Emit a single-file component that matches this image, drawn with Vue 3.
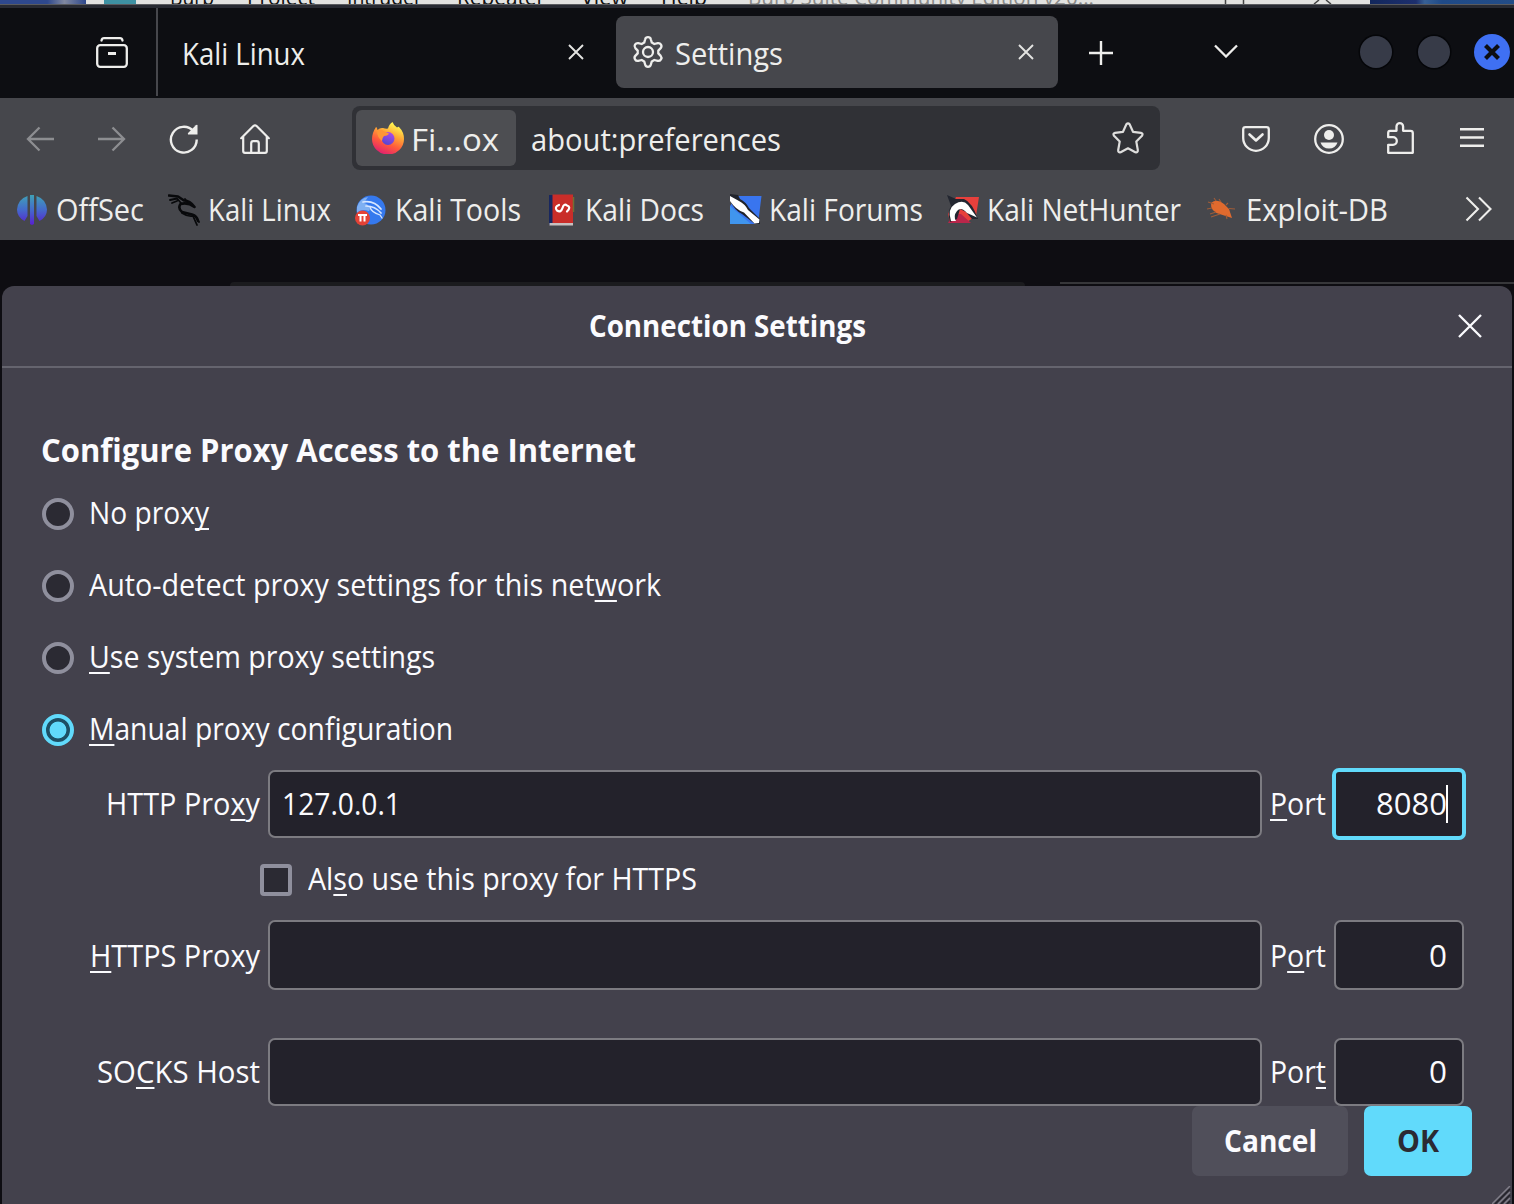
<script setup>
// Squeezes or stretches a label horizontally to a given advance width.
const vFit = {
  mounted(el, { value }) {
    const natural = el.getBoundingClientRect().width
    el.style.transform = `scaleX(${value / natural})`
    el.style.marginRight = `${value - natural}px`
  },
}

const menus = [
  { label: 'Burp', x: 0, w: 44 },
  { label: 'Project', x: 33, w: 68 },
  { label: 'Intruder', x: 32, w: 75 },
  { label: 'Repeater', x: 35, w: 88 },
  { label: 'View', x: 36, w: 47 },
  { label: 'Help', x: 33, w: 46 },
]

const radios = [
  { before: 'No prox', key: 'y', after: '', w: 120 },
  { before: 'Auto-detect proxy settings for this net', key: 'w', after: 'ork', w: 572 },
  { before: '', key: 'U', after: 'se system proxy settings', w: 346 },
  { before: '', key: 'M', after: 'anual proxy configuration', w: 364, on: true },
]
</script>

<template>
  <div class="screen">
    <div class="behind">
      <div class="wall left"></div>
      <div class="appicon"></div>
      <div class="menus">
        <span v-for="m in menus" :key="m.label" class="slot" :style="{ marginLeft: m.x + 'px' }"><span v-fit="m.w" class="t">{{ m.label }}</span></span>
        <span class="slot title"><span v-fit="346" class="t">Burp Suite Community Edition v20...</span></span>
      </div>
      <svg class="ctl" width="120" height="4" viewBox="0 0 120 4"><path d="M8.500 0V4M26.500 0V4M97 4l5-4M114 4l-5-4" fill="none" stroke="#444" stroke-width="1.500" /></svg>
      <div class="wall right"></div>
    </div>
    <div class="edge"></div>

    <div class="tabs">
      <div class="recent">
        <svg width="32" height="32" viewBox="0 0 32 32" fill="none" stroke="#eeeeec" stroke-width="2.300" stroke-linecap="round"><path d="M5.500 4.500Q6 2.200 8 2.200H24Q26 2.200 26.500 4.500" /><rect x="1.200" y="9.200" width="29.600" height="21.600" rx="3" /><path d="M12 17.500H20" stroke-width="3" stroke-linecap="butt" /></svg>
      </div>
      <div class="tab">
        <span class="grow"><span v-fit="123" class="t">Kali Linux</span></span>
        <svg width="16" height="16" viewBox="0 0 16 16"><path d="M1 1L15 15M15 1L1 15" stroke="#e4e4e2" stroke-width="1.900" /></svg>
      </div>
      <div class="tab active">
        <svg class="gear" width="32" height="32" viewBox="0 0 32 32" fill="none" stroke="#eeeeec" stroke-width="2.300" stroke-linejoin="round"><path d="M13.200 3.200Q13.700 1.200 16 1.200T18.800 3.200L19.800 6.600 22.300 8 25.800 7.100Q27.900 6.800 29 8.700T28.700 12.100L26.300 14.600V17.400L28.700 19.900Q30.100 21.500 29 23.300T25.800 24.900L22.300 24 19.800 25.400 18.800 28.800Q18.300 30.800 16 30.800T13.200 28.800L12.200 25.400 9.700 24 6.200 24.900Q4.100 25.200 3 23.300T3.300 19.900L5.700 17.400V14.600L3.300 12.100Q1.900 10.500 3 8.700T6.200 7.100L9.700 8 12.200 6.600Z" /><circle cx="16" cy="16" r="5" /></svg>
        <span class="grow"><span v-fit="108" class="t">Settings</span></span>
        <svg width="16" height="16" viewBox="0 0 16 16"><path d="M1 1L15 15M15 1L1 15" stroke="#e4e4e2" stroke-width="1.900" /></svg>
      </div>
      <svg class="plus" width="24" height="24" viewBox="0 0 24 24"><path d="M0 12H24M12 0V24" stroke="#eeeeec" stroke-width="2.400" /></svg>
      <svg class="chev" width="24" height="14" viewBox="0 0 24 14"><path d="M1 1.500L12 12.500L23 1.500" fill="none" stroke="#eeeeec" stroke-width="2.300" /></svg>
      <div class="winbtns">
        <i></i><i></i>
        <svg width="36" height="36" viewBox="0 0 36 36"><circle cx="18" cy="18" r="18" fill="#3f70f3" /><path d="M11.500 11.500L24.500 24.500M24.500 11.500L11.500 24.500" stroke="#0d0e12" stroke-width="4.200" /></svg>
      </div>
    </div>

    <div class="toolbar">
      <svg class="dim" width="28" height="26" viewBox="0 0 28 26"><path d="M28 13H2M13.500 1.500L2 13L13.500 24.500" /></svg>
      <svg class="dim fwd" width="28" height="26" viewBox="0 0 28 26"><path d="M0 13H26M14.500 1.500L26 13L14.500 24.500" /></svg>
      <svg class="reload" width="30" height="30" viewBox="0 0 30 30"><path d="M24.500 7.200A12.900 12.900 0 1 0 27.700 15.500" fill="none" stroke="#eeeeec" stroke-width="2.400" /><path d="M28.500 1V10.500H19Q18.500 9.500 19.300 8.700L26.800 1.200Q27.600.5 28.500 1Z" fill="#eeeeec" /></svg>
      <svg class="home" width="30" height="30" viewBox="0 0 30 30" fill="none" stroke="#eeeeec" stroke-width="2.200" stroke-linecap="round" stroke-linejoin="round"><path d="M1.200 14.200L13.400 2Q15 .6 16.600 2L28.800 14.200M3.200 12.500V27Q3.200 28.800 5 28.800H25Q26.800 28.800 26.800 27V12.500M11.200 28.500V19.500Q11.200 17.200 13.200 17.200H16.800Q18.800 17.200 18.800 19.500V28.500" /></svg>
      <div class="urlbar">
        <div class="identity">
          <svg width="32" height="32" viewBox="0 0 32 32">
            <defs>
              <linearGradient id="fx" x1=".8" y1="0" x2=".35" y2="1"><stop offset=".1" stop-color="#fff44f" /><stop offset=".4" stop-color="#ffa436" /><stop offset=".68" stop-color="#ff5a3c" /><stop offset="1" stop-color="#e0206f" /></linearGradient>
              <linearGradient id="fc" x1=".7" y1="0" x2=".3" y2="1"><stop offset="0" stop-color="#b04be8" /><stop offset="1" stop-color="#5146d0" /></linearGradient>
            </defs>
            <path d="M20.500 0Q22 4 25 5.500Q26.500 4.500 27 5Q32 10 32 17A16 15.500 0 0 1 0 17Q0 11 4 5Q5 5 5.500 8Q8 5.500 11 6Q14 7 16 6.500Q17 2 20.500 0Z" fill="url(#fx)" />
            <circle cx="16" cy="16.500" r="6.500" fill="url(#fc)" />
            <path d="M5 9Q9 7 12.500 9.500L17 11.500Q16 13.500 12 14Q10 16 10 19Q5 15 5 9Z" fill="#ff9636" />
          </svg>
          <span v-fit="88" class="t">Fi…ox</span>
        </div>
        <span class="grow url"><span v-fit="250" class="t">about:preferences</span></span>
        <svg width="32" height="32" viewBox="0 0 32 32"><path d="M14.400 2.300Q16 .3 17.600 2.300L21 9.800 29 10.900Q31.500 11.500 30 13.800L24.300 19.600 25.800 28Q26 30.900 23.300 30.200L16 26.300 8.700 30.200Q6 30.900 6.200 28L7.700 19.600 2 13.800Q.5 11.500 3 10.900L11 9.800Z" fill="none" stroke="#dededd" stroke-width="2.200" stroke-linejoin="round" /></svg>
      </div>
      <svg class="pocket" width="28" height="26" viewBox="0 0 28 26" fill="none" stroke="#eeeeec" stroke-linecap="round" stroke-linejoin="round"><path d="M3.500 1.200H24.500Q26.800 1.200 26.800 3.500V12A12.800 12.800 0 0 1 1.200 12V3.500Q1.200 1.200 3.500 1.200Z" stroke-width="2.300" /><path d="M7.500 8.500L14 14.500L20.500 8.500" stroke-width="2.600" /></svg>
      <svg class="acct" width="30" height="30" viewBox="0 0 30 30"><circle cx="15" cy="15" r="13.800" fill="none" stroke="#eeeeec" stroke-width="2.300" /><circle cx="15" cy="11" r="5" fill="#eeeeec" /><path d="M6.500 18.500H23.500Q21.500 24.500 15 24.500T6.500 18.500Z" fill="#eeeeec" /></svg>
      <svg class="ext" width="28" height="32" viewBox="0 0 28 32"><path d="M3 8.800H9.500V4.500A3.300 3.300 0 0 1 16.100 4.500V8.800H23.500Q25.800 8.800 25.800 11V30.800H1.200V22.800H6A3.800 3.800 0 0 0 6 15.200H1.200V11Q1.200 8.800 3 8.800Z" fill="none" stroke="#eeeeec" stroke-width="2.300" stroke-linejoin="round" /></svg>
      <svg class="menu" width="24" height="20" viewBox="0 0 24 20"><path d="M0 1.200H24M0 9.500H24M0 17.800H24" stroke="#eeeeec" stroke-width="2.400" /></svg>
    </div>

    <div class="bookmarks">
      <svg width="32" height="32" viewBox="0 0 32 32">
        <defs><linearGradient id="os" x1="0" y1="0" x2="0" y2="32" gradientUnits="userSpaceOnUse"><stop offset="0" stop-color="#3fa5b5" /><stop offset=".5" stop-color="#4469cc" /><stop offset="1" stop-color="#5a1ad0" /></linearGradient></defs>
        <path d="M11.500 2V22L8.500 27Q1 23 1 15.500Q2 5 11.500 2ZM20.500 2V22L23.500 27Q31 23 31 15.500Q30 5 20.500 2ZM14 1H18V30L16 31L14 30Z" fill="url(#os)" />
      </svg>
      <span class="bm"><span v-fit="88" class="t">OffSec</span></span>
      <svg style="margin-left: 24px" width="32" height="32" viewBox="0 0 32 32" fill="none" stroke="#08090b" stroke-linecap="round" stroke-linejoin="round"><path d="M1 1.500L10 2.500L16 6.500Q22 6.500 26.500 13Q20 8 12.500 10Q9.500 14 14 18L24 20.500Q29 22 30 27" stroke-width="2.600" /><path d="M2 6L9 4.500L13 9M4 9L9 7M17 5L19 8M14 19Q20 23 25 22L29 31M28 23L31 28" stroke-width="1.800" /></svg>
      <span class="bm"><span v-fit="123" class="t">Kali Linux</span></span>
      <svg style="margin-left: 24px" width="32" height="32" viewBox="0 0 32 32"><circle cx="16" cy="16" r="14.500" fill="#3579ee" /><path d="M2 13Q5 4 13 3L9 9Q14 10 15 15L14 17Q6 14 2 19Z" fill="#7fb0f2" /><g fill="none" stroke="#d8e7ff" stroke-linecap="round"><path d="M8 8Q19 6 26 15M11 12Q20 12 26 19" stroke-width="1.700" /><path d="M15 13Q16 18 25 21L27 24" stroke-width="1.300" /></g><circle cx="7.500" cy="24" r="7.500" fill="#e44236" /><path d="M3 21H12M5.500 21V27.500M9.500 21V27.500" stroke="#fff" stroke-width="2" /></svg>
      <span class="bm"><span v-fit="126" class="t">Kali Tools</span></span>
      <svg style="margin-left: 26px" width="32" height="32" viewBox="0 0 32 32"><path d="M2 1H8V29L2 31Z" fill="#18275f" /><path d="M5.500.5H26V29H5.500Z" fill="#c92d29" /><path d="M26.500 3V18" stroke="#706f36" stroke-width="1.500" /><path d="M2.500 29H26V31.500H2.500Z" fill="#c7c0c0" /><path d="M12 11Q7 13 10 16.500Q14 19 15.500 14T20 11.500Q24.500 13 20 17.500" fill="none" stroke="#fff" stroke-width="2.200" stroke-linecap="round" /></svg>
      <span class="bm docs"><span v-fit="119" class="t">Kali Docs</span></span>
      <svg style="margin-left: 25px" width="34" height="32" viewBox="0 0 34 32"><path d="M8 2H32.500L29 30H1V12Z" fill="#3975ef" /><path d="M1 12L22 30H1Z" fill="#4095ed" /><path d="M1 0L9 1L11 5Q17 8 20 14L31 25V30H26L13 20Q5 16 1 6Z" fill="#20232b" /><path d="M1 2L10 7Q16 10 19 16L30.500 25.500L30 29L25.500 29.500L15 18.500Q7 16 1 7Z" fill="#fff" /></svg>
      <span class="bm forums"><span v-fit="154" class="t">Kali Forums</span></span>
      <svg style="margin-left: 24px" width="32" height="32" viewBox="0 0 32 32"><path d="M9 3H32L29 22L20 28H3L1 20Z" fill="#e7403c" /><path d="M1 29L6 20H14L24 29Z" fill="#b9264a" /><path d="M0 1L9 5L17 5Q25 8 31 25L25 25L19 18L13 15L10 25L3 28Q0 18 4 12Z" fill="#222630" /><path d="M4 27Q0 15 8 10T21 11L30 23.500L20 19Q14 12 10 17T9 27Z" fill="#fff" /></svg>
      <span class="bm"><span v-fit="194" class="t">Kali NetHunter</span></span>
      <svg style="margin-left: 25px" width="32" height="32" viewBox="0 0 32 32"><path d="M5 9Q11 4 18 10L23 15L26 24L15 20.500Q4 18 5 9Z" fill="#e06a2e" /><path d="M8 10L2 8M6 14L1 15M10 18L4 20M14 20L5 23M15 8L13 5M20 11L22 9M23 14.500L29 15M20 21L21 25M10 7L8 4" stroke="#a05c38" stroke-width="1.100" /></svg>
      <span class="bm"><span v-fit="142" class="t">Exploit-DB</span></span>
      <svg class="more" width="28" height="26" viewBox="0 0 28 26"><path d="M1.500 1.500L13 13L1.500 24.500M14 1.500L25.500 13L14 24.500" fill="none" stroke="#eeeeec" stroke-width="2.100" /></svg>
    </div>

    <div class="page">
      <div class="peek"><div class="banner"></div><div class="search"></div></div>

      <div class="dialog">
        <div class="head">
          <span class="dtitle"><span v-fit="277" class="t b">Connection Settings</span></span>
          <svg width="24" height="24" viewBox="0 0 24 24"><path d="M1 1L23 23M23 1L1 23" stroke="#fbfbfe" stroke-width="2.300" /></svg>
        </div>

        <div class="body">
          <h2><span v-fit="595" class="t b">Configure Proxy Access to the Internet</span></h2>
          <label v-for="r in radios" :key="r.key" class="radio">
            <i :class="{ on: r.on }"></i>
            <span v-fit="r.w" class="t">{{ r.before }}<u>{{ r.key }}</u>{{ r.after }}</span>
          </label>

          <div class="row first">
            <span class="lab"><span v-fit="154" class="t">HTTP Pro<u>x</u>y</span></span>
            <div class="field host"><span v-fit="119" class="t">127.0.0.1</span></div>
            <span class="port"><span v-fit="56" class="t"><u>P</u>ort</span></span>
            <div class="field num focus"><span v-fit="71" class="t">8080</span><b class="caret"></b></div>
          </div>
          <label class="check"><i></i><span v-fit="389" class="t">Al<u>s</u>o use this proxy for HTTPS</span></label>
          <div class="row second">
            <span class="lab"><span v-fit="170" class="t"><u>H</u>TTPS Proxy</span></span>
            <div class="field host"></div>
            <span class="port"><span v-fit="56" class="t">P<u>o</u>rt</span></span>
            <div class="field num"><span v-fit="18" class="t">0</span></div>
          </div>
          <div class="row third">
            <span class="lab"><span v-fit="163" class="t">SO<u>C</u>KS Host</span></span>
            <div class="field host"></div>
            <span class="port"><span v-fit="56" class="t">Por<u>t</u></span></span>
            <div class="field num"><span v-fit="18" class="t">0</span></div>
          </div>
          <div class="buttons">
            <div class="btn cancel"><span v-fit="93" class="t b">Cancel</span></div>
            <div class="btn ok"><span v-fit="42" class="t b">OK</span></div>
          </div>
        </div>
        <svg class="grip" width="20" height="18" viewBox="0 0 20 18"><path d="M0 18L18 0M6 18L18 6M12 18L18 12" stroke="#807e88" stroke-width="1.500" /><path d="M3 18L18 3M9 18L18 9M15 18L18 15" stroke="#24232a" stroke-width="1.500" /></svg>
      </div>
    </div>
  </div>
</template>

<style>
body { background: #0e0d12; overflow: hidden; }
</style>

<style scoped>
* { box-sizing: border-box; }
svg { display: block; flex: none; }
.screen { width: 1514px; height: 1204px; overflow: hidden; display: flex; flex-direction: column; background: #0e0d12; color: #eeeeec; font-family: "Open Sans", "Noto Sans", sans-serif; font-size: 30.5px; line-height: 40px; }
.t { display: inline-block; white-space: pre; transform-origin: 0 50%; }
.b { font-weight: 660; }
.grow { flex: 1; display: flex; }
u { text-decoration: underline; text-decoration-thickness: 2px; text-underline-offset: 4px; text-decoration-skip-ink: none; }

.behind { height: 4px; flex: none; background: #e2e2e0; display: flex; overflow: hidden; }
.wall.left { width: 86px; background: linear-gradient(90deg, #2e488d 55%, #8088a0 75%, #2e488d); }
.appicon { width: 32px; margin-left: 18px; background: #3e91a3; }
.menus { width: 958px; margin: -24px -50px 0 34px; display: flex; flex: none; color: #111; font-size: 22px; font-weight: 500; line-height: 40px; height: 40px; }
.slot { display: flex; flex: none; }
.title { margin-left: 41px; color: #8b8b8a; font-weight: 400; }
.ctl { margin-left: 139px; }
.wall.right { flex: 1; margin-left: 33px; background: linear-gradient(90deg, #12275c, #1d2f6e 32%, #376095 38%, #1f4a88 50%, #234c86); }
.edge { height: 4px; flex: none; background: #282a32; border-top: 1px solid #5a5b5f; }

.tabs { height: 90px; flex: none; background: #0d0e12; display: flex; align-items: flex-start; }
.recent { width: 158px; height: 88px; padding: 28px 0 0 96px; border-right: 2px solid #46474c; flex: none; }
.tab { width: 442px; height: 72px; margin-top: 8px; padding: 0 24px; display: flex; align-items: center; flex: none; }
.tab .grow { margin-top: 1px; }
.tab:not(.active) { width: 450px; margin-right: 8px; }
.active { background: #46474c; border-radius: 8px; padding-left: 16px; }
.gear { margin-right: 11px; }
.plus { margin: 33px 0 0 31px; }
.chev { margin: 36px 0 0 101px; }
.winbtns { display: flex; align-items: center; margin: 26px 0 0 122px; }
.winbtns i { width: 32px; height: 32px; border-radius: 50%; background: #373b48; box-shadow: 0 0 0 1.500px #050609; margin-right: 26px; flex: none; }
.winbtns i + i { margin-right: 24px; }

.toolbar { height: 82px; flex: none; background: #46474c; display: flex; align-items: center; padding-left: 26px; }
.dim { fill: none; stroke: #8d8e91; stroke-width: 2.300; }
.fwd { margin-left: 44px; }
.reload { margin: -1px 0 0 43px; }
.home { margin-left: 41px; }
.urlbar { margin: -2px 0 0 82px; width: 808px; height: 64px; border-radius: 8px; background: #303136; padding: 4px 16px 4px 4px; display: flex; align-items: center; flex: none; }
.identity { width: 160px; height: 56px; border-radius: 6px; background: #4d4e52; padding-left: 16px; display: flex; align-items: center; gap: 7px; }
.identity .t, .url .t { margin-top: 1px; }
.url { padding-left: 15px; }
.pocket { margin-left: 82px; }
.acct { margin-left: 44px; }
.ext { margin: -2px 0 0 43px; }
.menu { margin: -3px 0 0 45px; }

.bookmarks { height: 60px; flex: none; background: #46474c; display: flex; align-items: center; padding-left: 16px; }
.bm { margin: -3px 0 0 8px; display: flex; flex: none; }
.docs { margin-left: 6px; }
.forums { margin-left: 6px; }
.more { margin: -3px 0 0 77px; }

.page { flex: 1; padding: 42px 2px 0; }
.peek { height: 4px; margin-right: -2px; display: flex; padding-left: 228px; }
.banner { width: 795px; background: #1b1b1e; border-radius: 4px 4px 0 0; }
.search { flex: 1; margin-left: 35px; border-top: 2px solid #37373a; }
.dialog { height: 918px; background: #43414c; border-radius: 12px 12px 0 0; color: #fbfbfe; position: relative; }
.head { height: 82px; border-bottom: 2px solid #65646e; display: flex; align-items: center; padding: 0 30px 0 587px; }
.dtitle { flex: 1; display: flex; margin-top: -3px; }
.body { padding: 62px 0 0 40px; }
h2 { margin: 0 0 0 -1px; font-size: 33px; font-weight: 600; line-height: 40px; height: 48px; display: flex; }
.radio { height: 72px; display: flex; align-items: center; }
.radio i { width: 32px; height: 32px; border: 4px solid #8f8f9d; border-radius: 50%; background: #2b2a33; margin-right: 15px; flex: none; }
.radio i.on { border-color: #61dafb; background: radial-gradient(circle, #61dafb 8px, #1d4f64 8.800px); }
.radio .t { margin-top: -4px; }
.first { margin-top: 2px; }
.row { display: flex; align-items: center; height: 72px; }
.lab { width: 218px; display: flex; justify-content: flex-end; margin-top: -3px; }
.field { background: #23222b; border: 2px solid #7c7b81; border-radius: 7px; height: 68px; display: flex; align-items: center; flex: none; }
.host { width: 994px; margin-left: 8px; padding-left: 12px; }
.field .t { margin-top: -3px; }
.port { width: 64px; padding-left: 8px; display: flex; margin-top: -3px; }
.num { width: 130px; margin-left: 8px; justify-content: flex-end; padding-right: 15px; }
.focus { width: 134px; height: 72px; border: 4px solid #61dafb; margin-left: 6px; padding-right: 14px; }
.caret { width: 2px; height: 38px; background: #fff; margin: 0 0 0 -1px; flex: none; }
.check { height: 80px; display: flex; align-items: center; padding-left: 218px; }
.check i { width: 32px; height: 32px; border: 4px solid #8f8f9d; border-radius: 4px; background: #2b2a33; margin-right: 16px; flex: none; }
.check .t { margin-top: -4px; }
.second { height: 70px; }
.second .field { height: 70px; }
.second .lab, .second .port { margin-top: -1px; }
.second .num .t { margin-top: -1px; }
.third { height: 68px; margin-top: 48px; }
.third .lab, .third .port, .third .num .t { margin-top: -3px; }
.buttons { display: flex; gap: 16px; justify-content: flex-end; padding-right: 40px; }
.btn { height: 70px; border-radius: 7px; display: flex; align-items: center; justify-content: center; }
.btn .t { margin-top: -2px; }
.cancel { width: 156px; background: #504f5a; }
.ok { width: 108px; background: #61dafb; color: #2b2a33; }
.grip { position: absolute; right: 0; bottom: 0; }
</style>
